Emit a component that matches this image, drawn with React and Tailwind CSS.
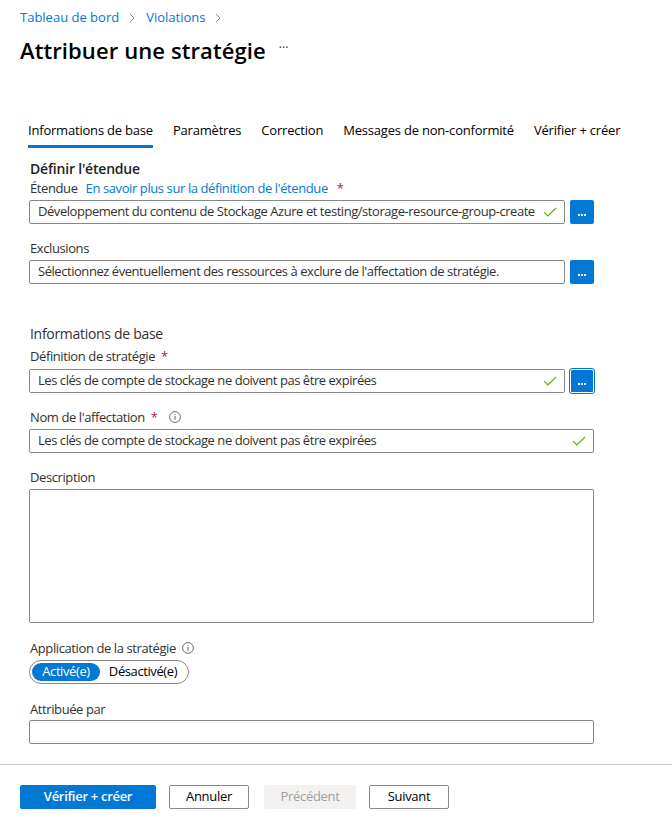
import React from "react";

const font = { fontFamily: '"Open Sans", "Noto Sans", sans-serif' };

function Check() {
  return (
    <svg width="14" height="10" viewBox="0 0 14 10" className="shrink-0 ml-[6px]">
      <path d="M1 5.2 L4.8 9 L13 1" fill="none" stroke="#5db300" strokeWidth="1.2" />
    </svg>
  );
}

function Info() {
  return (
    <svg width="12" height="12" viewBox="0 0 12 12" className="shrink-0">
      <circle cx="6" cy="6" r="5.4" fill="none" stroke="#605e5c" strokeWidth="0.9" />
      <rect x="5.5" y="5" width="1" height="3.8" fill="#605e5c" />
      <rect x="5.5" y="3.1" width="1" height="1" fill="#605e5c" />
    </svg>
  );
}

function Dots() {
  return (
    <div className="flex gap-[1px]">
      <div className="w-[2px] h-[2px] bg-white" />
      <div className="w-[2px] h-[2px] bg-white" />
      <div className="w-[2px] h-[2px] bg-white" />
    </div>
  );
}

function DotsBtn({ focused }) {
  return (
    <div
      className={
        "w-[24px] h-[24px] bg-[#0078d4] rounded-[2px] flex items-end justify-center shrink-0 " +
        (focused ? "outline outline-1 outline-[#0078d4] border border-white pb-[7px]" : "pb-[8px]")
      }
    >
      <Dots />
    </div>
  );
}

function Input({ value, check, className = "" }) {
  return (
    <div
      className={
        "h-[24px] border border-[#8a8886] rounded-[2px] flex items-center pl-[8px] pr-[7px] text-[13px] text-[#323130] tracking-[-0.45px] " +
        className
      }
    >
      <span className="flex-1 min-w-0 whitespace-nowrap overflow-hidden">{value}</span>
      {check && <Check />}
    </div>
  );
}

const Star = () => <span className="text-[#a4262c] ml-[6px]">*</span>;

export default function App() {
  return (
    <div className="w-[672px] h-[829px] bg-white relative overflow-hidden text-[#323130]" style={font}>
      <div className="px-[20px] pt-[8px]">
        <div className="flex items-center text-[13px] text-[#0078d4] h-[20px]">
          <span>Tableau de bord</span>
          <span className="mx-[10px]">
            <svg width="7" height="10" viewBox="0 0 7 10"><path d="M1 1 L5 5 L1 9" fill="none" stroke="#8a8886" strokeWidth="1" /></svg>
          </span>
          <span>Violations</span>
          <span className="mx-[10px]">
            <svg width="7" height="10" viewBox="0 0 7 10"><path d="M1 1 L5 5 L1 9" fill="none" stroke="#8a8886" strokeWidth="1" /></svg>
          </span>
        </div>
        <div className="flex items-center mt-[5px] h-[34px]">
          <span className="text-[22px] text-black font-semibold tracking-[0.1px]">Attribuer une stratégie</span>
          <span className="ml-[13px] text-[#323130] text-[12px] mt-[-4px]">···</span>
        </div>
      </div>

      <div className="flex text-[13px] text-black mt-[53px] ml-[28px] gap-[20px] items-start tracking-[-0.2px]">
        <div className="flex flex-col">
          <span className="leading-[20px]">Informations de base</span>
          <div className="h-[3px] bg-[#0078d4] mt-[5px]" />
        </div>
        <span className="leading-[20px]">Paramètres</span>
        <span className="leading-[20px]">Correction</span>
        <span className="leading-[20px]">Messages de non-conformité</span>
        <span className="leading-[20px]">Vérifier + créer</span>
      </div>

      <div className="pl-[29px] w-[594px] text-[13px] tracking-[-0.4px]">
        <div className="mt-[11px] text-[14px] font-semibold text-[#201f1e] pl-[1px] leading-[20px] tracking-[-0.2px]">Définir l'étendue</div>
        <div className="flex items-center leading-[18px] pl-[1px]">
          <span>Étendue</span>
          <span className="text-[#0078d4] ml-[8px]">En savoir plus sur la définition de l'étendue</span>
          <span className="text-[#a4262c] ml-[9px]">*</span>
        </div>
        <div className="flex gap-[5px] mt-[3px]">
          <Input
            className="flex-1 min-w-0"
            check
            value="Développement du contenu de Stockage Azure et testing/storage-resource-group-create"
          />
          <DotsBtn />
        </div>

        <div className="mt-[15px] leading-[18px] pl-[1px]">Exclusions</div>
        <div className="flex gap-[5px] mt-[3px]">
          <Input className="flex-1 min-w-0" value="Sélectionnez éventuellement des ressources à exclure de l'affectation de stratégie." />
          <DotsBtn />
        </div>

        <div className="mt-[40px] text-[14px] leading-[20px] pl-[1px] tracking-[-0.3px]">Informations de base</div>
        <div className="mt-[3px] leading-[18px] pl-[1px]">
          Définition de stratégie
          <Star />
        </div>
        <div className="flex gap-[5px] mt-[4px]">
          <Input className="flex-1 min-w-0" check value="Les clés de compte de stockage ne doivent pas être expirées" />
          <DotsBtn focused />
        </div>

        <div className="mt-[15px] leading-[18px] pl-[1px] flex items-center">
          Nom de l'affectation
          <Star />
          <span className="ml-[11px]"><Info /></span>
        </div>
        <Input className="mt-[3px]" check value="Les clés de compte de stockage ne doivent pas être expirées" />

        <div className="mt-[15px] leading-[18px] pl-[1px]">Description</div>
        <div className="mt-[3px] h-[134px] border border-[#8a8886] rounded-[2px]" />

        <div className="mt-[16px] leading-[18px] pl-[1px] flex items-center">
          Application de la stratégie
          <span className="ml-[6px]"><Info /></span>
        </div>
        <div className="mt-[3px] w-[160px] h-[24px] border border-[#8a8886] rounded-full flex items-center px-[2px]">
          <div className="h-[18px] w-[68px] bg-[#0078d4] rounded-full text-white flex items-center justify-center">Activé(e)</div>
          <div className="flex-1 flex items-center justify-center text-black">Désactivé(e)</div>
        </div>

        <div className="mt-[16px] leading-[18px] pl-[1px]">Attribuée par</div>
        <Input className="mt-[2px]" value="" />
      </div>

      <div className="absolute left-0 right-0 top-[764px] h-px bg-[#c8c6c4]" />
      <div className="absolute left-[20px] top-[785px] flex gap-[13px] text-[13px] tracking-[-0.3px]">
        <div className="w-[136px] h-[24px] bg-[#0078d4] text-white rounded-[2px] flex items-center justify-center font-semibold">Vérifier + créer</div>
        <div className="w-[80px] h-[24px] border border-[#8a8886] rounded-[2px] flex items-center justify-center text-black">Annuler</div>
        <div className="w-[92px] h-[24px] bg-[#f3f2f1] rounded-[2px] flex items-center justify-center text-[#a19f9d] ml-[2px]">Précédent</div>
        <div className="w-[80px] h-[24px] border border-[#8a8886] rounded-[2px] flex items-center justify-center text-black">Suivant</div>
      </div>
    </div>
  );
}
